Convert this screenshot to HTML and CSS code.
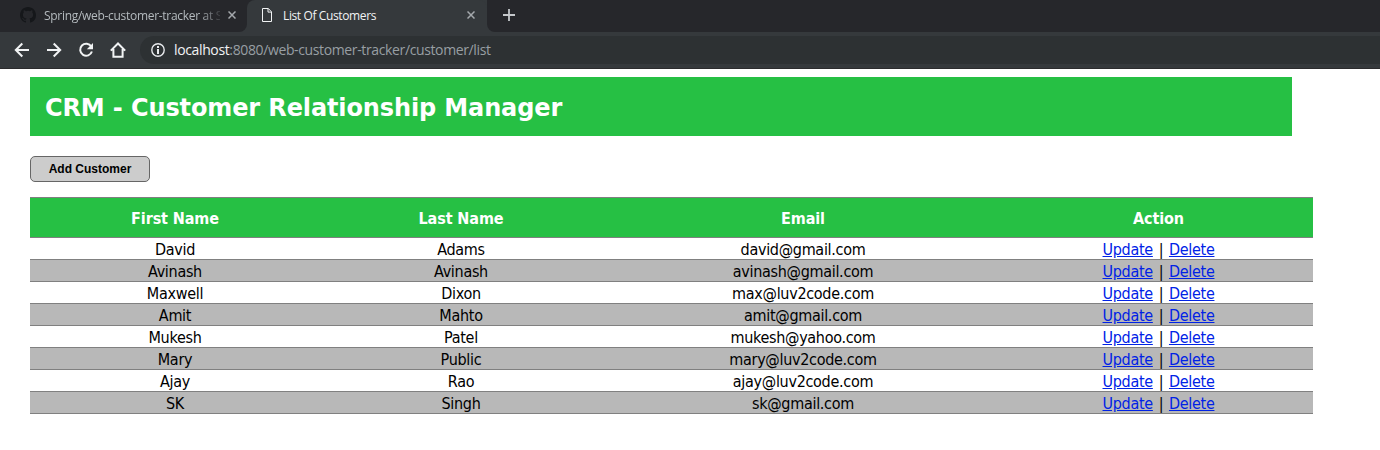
FILE: index.html
```html
<!DOCTYPE html>
<html lang="en">
<head>
<meta charset="utf-8">
<title>List Of Customers</title>
<link rel="stylesheet" href="styles.css">
</head>
<body>
<header class="browser">
  <div class="tabs">
    <div class="tab">
      <svg class="github" width="16" height="16" viewBox="0 0 16 16"><path fill="#15171a" d="M8 0C3.58 0 0 3.58 0 8c0 3.54 2.29 6.53 5.47 7.59.4.07.55-.17.55-.38 0-.19-.01-.82-.01-1.49-2.01.37-2.53-.49-2.69-.94-.09-.23-.48-.94-.82-1.13-.28-.15-.68-.52-.01-.53.63-.01 1.08.58 1.23.82.72 1.21 1.87.87 2.33.66.07-.52.28-.87.51-1.07-1.78-.2-3.64-.89-3.64-3.95 0-.87.31-1.59.82-2.15-.08-.2-.36-1.02.08-2.12 0 0 .67-.21 2.2.82a7.6 7.6 0 0 1 4 0c1.53-1.04 2.2-.82 2.2-.82.44 1.1.16 1.92.08 2.12.51.56.82 1.27.82 2.15 0 3.07-1.87 3.75-3.65 3.95.29.25.54.73.54 1.48 0 1.07-.01 1.93-.01 2.2 0 .21.15.46.55.38A8 8 0 0 0 16 8c0-4.42-3.58-8-8-8z"/></svg>
      <span class="tab-title faded">Spring/web-customer-tracker at S</span>
      <svg class="close" width="8" height="8" viewBox="0 0 8 8"><path d="M.5.5l7 7M7.5.5l-7 7"/></svg>
    </div>
    <div class="tab active">
      <svg class="page" width="10" height="14" viewBox="0 0 10 14"><path fill="none" stroke="#f1f3f4" d="M.5.5h5.8l3.200 3.300v9.700h-9zM6 .5v3.600h3.500"/></svg>
      <span class="tab-title">List Of Customers</span>
      <svg class="close" width="8" height="8" viewBox="0 0 8 8"><path d="M.5.5l7 7M7.5.5l-7 7"/></svg>
    </div>
    <svg class="plus" width="12" height="12" viewBox="0 0 12 12"><path stroke="#c5c8cb" stroke-width="1.8" d="M6 0v12M0 6h12"/></svg>
  </div>
  <div class="toolbar">
    <svg class="nav" width="16" height="16" viewBox="0 0 16 16"><path d="M15 8H2M8.300 1.500L1.800 8l6.500 6.500"/></svg>
    <svg class="nav" width="16" height="16" viewBox="0 0 16 16"><path d="M1 8h13M7.700 1.500L14.200 8l-6.500 6.500"/></svg>
    <svg class="nav" width="16" height="16" viewBox="0 0 16 16"><path d="M13.300 4.600A6 6 0 1 0 13.900 9.500"/><path class="solid" d="M15 1v6.300H8.800z"/></svg>
    <svg class="nav" width="16" height="16" viewBox="0 0 16 16"><path d="M.8 8.600L8 1.500l7.200 7.100M3.400 7v7.800h9.200V7"/></svg>
    <div class="address">
      <svg width="14" height="14" viewBox="0 0 14 14"><circle cx="7" cy="7" r="6.200" fill="none" stroke="#e8eaed" stroke-width="1.400"/><path fill="#e8eaed" d="M6 3h2v2H6zM6 6h2v5H6z"/></svg>
      <span class="url"><span class="host">localhost</span>:8080/web-customer-tracker/customer/list</span>
    </div>
  </div>
</header>
<main class="content">
  <h2 class="banner">CRM - Customer Relationship Manager</h2>
  <button class="add-button">Add Customer</button>
  <table class="customers">
    <colgroup><col class="c-first"><col class="c-last"><col class="c-email"><col class="c-action"></colgroup>
    <thead><tr><th>First Name</th><th>Last Name</th><th>Email</th><th>Action</th></tr></thead>
    <tbody>
      <tr><td>David</td><td>Adams</td><td>david@gmail.com</td><td class="actions"><a href="#">Update</a> | <a href="#">Delete</a></td></tr>
      <tr><td>Avinash</td><td>Avinash</td><td>avinash@gmail.com</td><td class="actions"><a href="#">Update</a> | <a href="#">Delete</a></td></tr>
      <tr><td>Maxwell</td><td>Dixon</td><td>max@luv2code.com</td><td class="actions"><a href="#">Update</a> | <a href="#">Delete</a></td></tr>
      <tr><td>Amit</td><td>Mahto</td><td>amit@gmail.com</td><td class="actions"><a href="#">Update</a> | <a href="#">Delete</a></td></tr>
      <tr><td>Mukesh</td><td>Patel</td><td>mukesh@yahoo.com</td><td class="actions"><a href="#">Update</a> | <a href="#">Delete</a></td></tr>
      <tr><td>Mary</td><td>Public</td><td>mary@luv2code.com</td><td class="actions"><a href="#">Update</a> | <a href="#">Delete</a></td></tr>
      <tr><td>Ajay</td><td>Rao</td><td>ajay@luv2code.com</td><td class="actions"><a href="#">Update</a> | <a href="#">Delete</a></td></tr>
      <tr><td>SK</td><td>Singh</td><td>sk@gmail.com</td><td class="actions"><a href="#">Update</a> | <a href="#">Delete</a></td></tr>
    </tbody>
  </table>
</main>
</body>
</html>
```
FILE: styles.css
```css
* { box-sizing: border-box; }
body { margin: 0; background: #fff; overflow: hidden; }
svg { display: block; flex: none; }

.browser { height: 69px; background: #35393c; border-bottom: 1px solid #2b2b2d; font-family: "Open Sans", "Noto Sans", sans-serif; }
.tabs { display: flex; height: 32px; background: linear-gradient(90deg, #35393c 495px, #26272b 495px); }
.tab { display: flex; align-items: center; width: 247px; height: 32px; padding: 0 11px 2px 20px; background: #26272b; color: #b4babe; font-size: 12px; border-bottom-right-radius: 8px; box-shadow: 8px -8px 0 #26272b; }
.tab.active { position: relative; width: 240px; padding-left: 15px; padding-right: 12px; background: #35393c; color: #f1f3f4; border-radius: 8px 8px 0 0; box-shadow: none; }
.tab-title { flex: 1; margin-left: 8px; padding-top: 1px; white-space: nowrap; line-height: 20px; letter-spacing: -0.38px; }
.tab.active .tab-title { margin-left: 11px; }
.tab-title.faded { flex: none; width: 176px; margin-right: 8px; letter-spacing: -0.3px; -webkit-mask-image: linear-gradient(90deg, #000 155px, transparent 180px); mask-image: linear-gradient(90deg, #000 155px, transparent 180px); }
.close { stroke: #a4a8ac; stroke-width: 1.5; fill: none; }
.plus { box-sizing: content-box; padding: 9px 0 11px 16px; background: #26272b; border-bottom-left-radius: 8px; }

.toolbar { display: flex; align-items: center; height: 36px; padding-left: 14px; }
.nav { margin-right: 16px; fill: none; stroke: #f1f3f4; stroke-width: 2; }
.nav .solid { fill: #f1f3f4; stroke: none; }
.address { display: flex; flex: 1; align-items: center; gap: 9px; height: 28px; margin-left: -2px; padding-left: 11px; background: #2d3133; border-radius: 14px 0 0 14px; }
.url { color: #989fa3; font-size: 14px; letter-spacing: -0.37px; line-height: 20px; white-space: nowrap; }
.host { color: #f1f3f4; }

.content { width: 1283px; margin: 8px 0 0 30px; font-family: "DejaVu Sans Condensed", "Noto Sans", sans-serif; }
.banner { width: 1262px; height: 59px; margin: 0; padding: 2px 0 0 15px; background: #26c044; color: #fff; font: bold 24px/59px "DejaVu Sans", sans-serif; letter-spacing: -0.12px; }
.add-button { display: block; width: 120px; height: 26px; margin: 20px 0 15px; padding: 0; border: 1px solid #666; border-radius: 5px; background: #ccc; color: #000; font: bold 12px "Liberation Sans", Arial, sans-serif; }

.customers { width: 1283px; table-layout: fixed; border-collapse: separate; border-spacing: 0; text-align: center; font-size: 16px; }
.c-first { width: 290px; }
.c-last { width: 282px; }
.c-email { width: 402px; }
.c-action { width: 309px; }
.customers th { height: 41px; padding: 2px 0 0; border: solid gray; border-width: 1px 0; background: #26c044; color: #fff; line-height: 37px; letter-spacing: -0.1px; }
.customers td { height: 22px; padding: 2px 0 0; border-bottom: 1px solid gray; line-height: 19px; letter-spacing: -0.3px; }
.customers .actions { word-spacing: 1.5px; }
.customers tbody tr:nth-child(even) { background: #b8b8b8; }
.customers a { color: #0022e6; }
```
